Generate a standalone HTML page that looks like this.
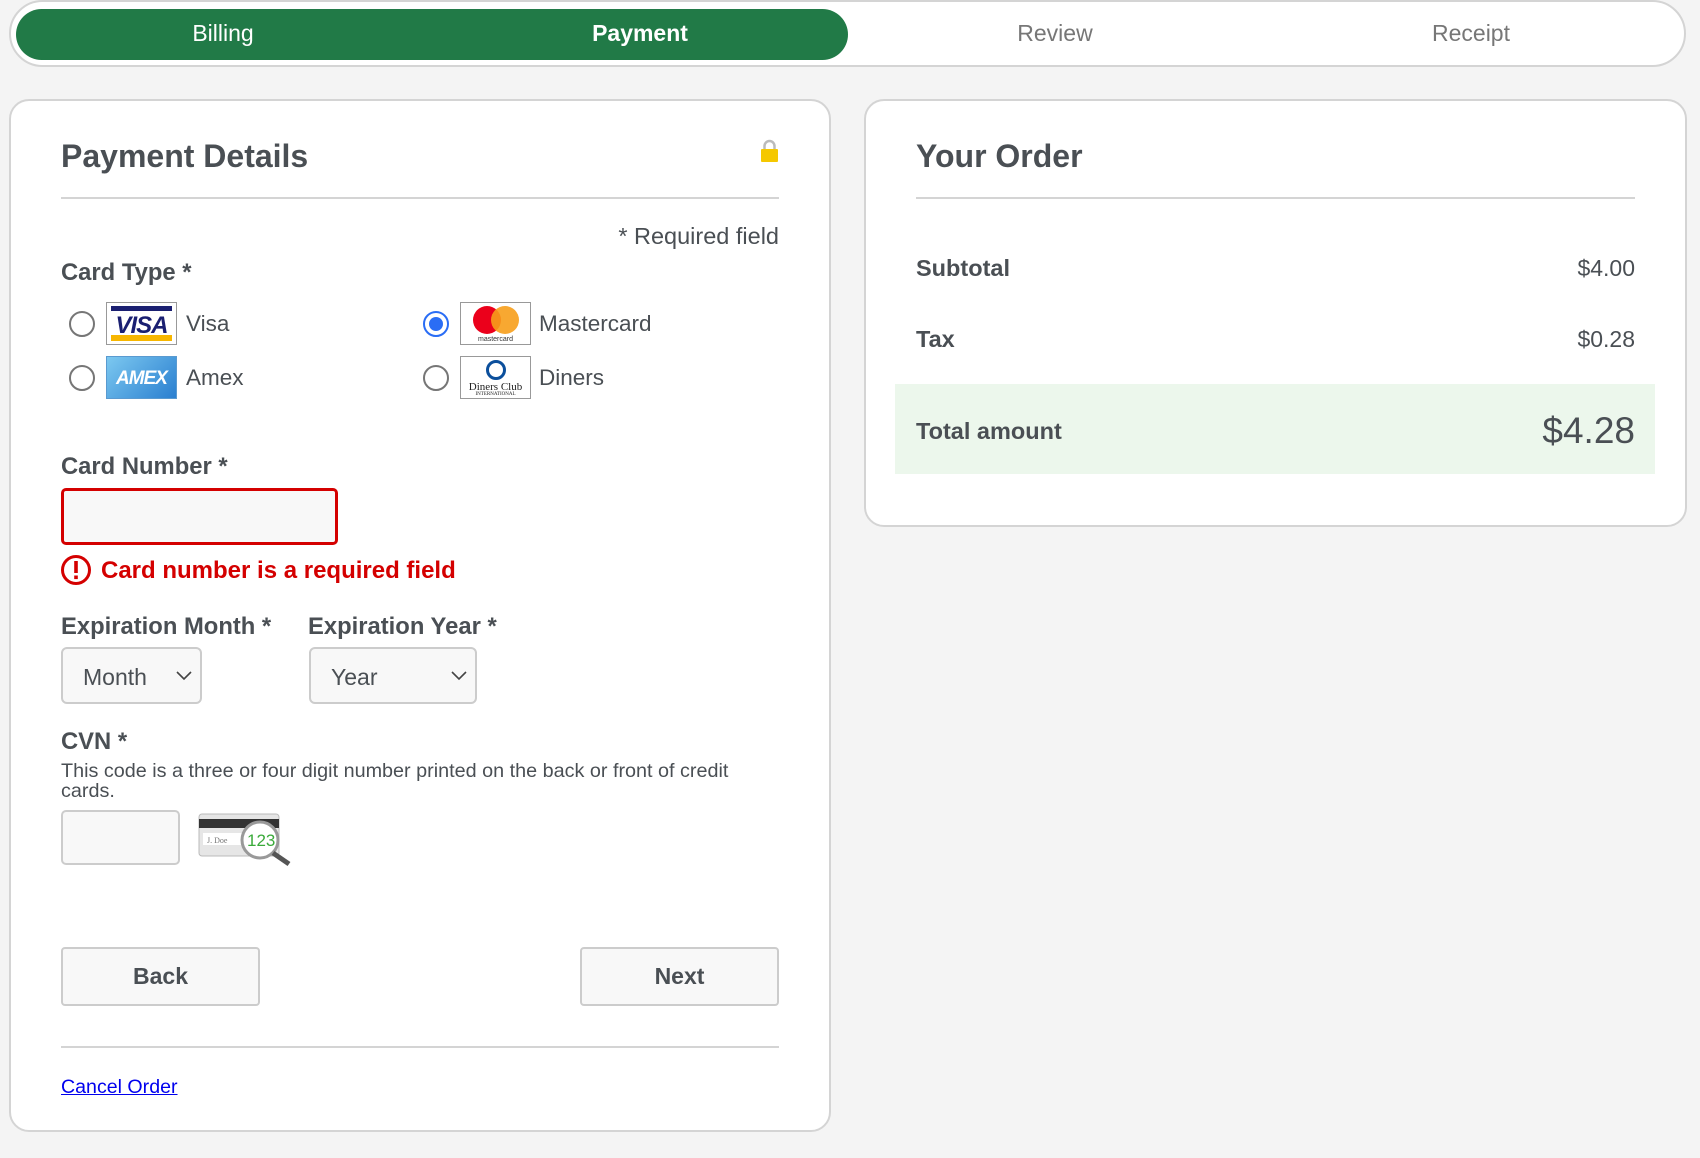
<!DOCTYPE html>
<html><head><meta charset="utf-8"><style>
*{box-sizing:border-box;margin:0;padding:0}
body{width:1700px;height:1158px;background:#f4f4f4;font-family:"Liberation Sans",Arial,sans-serif;color:#4a4f54;position:relative;overflow:hidden}
.a{position:absolute}
.lbl{font-size:23.8px;font-weight:bold;color:#4a4f54}
.t{line-height:1;white-space:nowrap}
.radio{position:absolute;width:26px;height:26px;border:2px solid #767676;border-radius:50%;background:#fff}
.logo{position:absolute;width:71px;height:43px;border:1px solid #999;background:#fff;overflow:hidden}
.sel{position:absolute;border:2px solid #ccc;border-radius:6px;background:#f8f8f8;font-size:23px;color:#4a4f54}
.btn{position:absolute;border:2px solid #ccc;border-radius:4px;background:#f8f8f8;font-size:23px;font-weight:bold;text-align:center;line-height:55px;color:#4a4f54}
</style></head><body>
<!-- stepper -->
<div class="a" style="left:9px;top:0;width:1677px;height:67px;border:2px solid #d4d4d4;border-radius:34px;background:#fff"></div>
<div class="a" style="left:16px;top:9px;width:832px;height:51px;background:#217a47;border-radius:26px"></div>
<div class="a t" style="left:123px;top:22px;width:200px;text-align:center;font-size:23px;color:#fff">Billing</div>
<div class="a t" style="left:540px;top:22px;width:200px;text-align:center;font-size:23px;color:#fff;font-weight:bold">Payment</div>
<div class="a t" style="left:955px;top:22px;width:200px;text-align:center;font-size:23px;color:#777">Review</div>
<div class="a t" style="left:1371px;top:22px;width:200px;text-align:center;font-size:23px;color:#777">Receipt</div>

<!-- left card -->
<div class="a" style="left:9px;top:99px;width:822px;height:1033px;border:2px solid #d4d4d4;border-radius:20px;background:#fff"></div>
<div class="a t" style="left:61px;top:140px;font-size:32px;font-weight:bold">Payment Details</div>
<svg class="a" style="left:760px;top:139px" width="19" height="24" viewBox="0 0 19 24"><path d="M4.5 11V7a5 5 0 0 1 10 0v4" fill="none" stroke="#bbb" stroke-width="2.5"/><rect x="1" y="10" width="17" height="13" rx="1" fill="#f5c800"/></svg>
<div class="a" style="left:61px;top:197px;width:718px;height:2px;background:#d4d4d4"></div>
<div class="a t" style="left:579px;top:225px;width:200px;text-align:right;font-size:23.5px">* Required field</div>
<div class="a t lbl" style="left:61px;top:261px">Card Type *</div>

<div class="radio" style="left:69px;top:311px"></div>
<div class="logo" style="left:106px;top:302px"><div style="position:absolute;left:4px;top:3px;right:4px;height:5px;background:#1a1f71"></div><div style="position:absolute;left:0;right:0;top:9px;text-align:center;font:italic bold 24px 'Liberation Sans';color:#1a1f71;letter-spacing:-1px">VISA</div><div style="position:absolute;left:4px;bottom:3px;right:4px;height:6px;background:#f7b600"></div></div>
<div class="a t" style="left:186px;top:313px;font-size:22.5px">Visa</div>

<div class="radio" style="left:423px;top:311px;border-color:#2a6df5"><div style="position:absolute;left:4px;top:4px;width:14px;height:14px;border-radius:50%;background:#2a6df5"></div></div>
<div class="logo" style="left:460px;top:302px"><div style="position:absolute;left:12px;top:3px;width:28px;height:28px;border-radius:50%;background:#eb001b"></div><div style="position:absolute;left:30px;top:3px;width:28px;height:28px;border-radius:50%;background:#f79e1b;opacity:.9"></div><div style="position:absolute;left:0;right:0;bottom:1px;text-align:center;font-size:7px;color:#333">mastercard</div></div>
<div class="a t" style="left:539px;top:313px;font-size:22.5px">Mastercard</div>

<div class="radio" style="left:69px;top:365px"></div>
<div class="logo" style="left:106px;top:356px;background:linear-gradient(135deg,#7cc8f0,#2a7fd0);border-color:#5a9ad0"><div style="position:absolute;left:0;right:0;top:11px;text-align:center;font:italic bold 19px 'Liberation Sans';color:#fff;letter-spacing:-1px">AMEX</div></div>
<div class="a t" style="left:186px;top:367px;font-size:22.5px">Amex</div>

<div class="radio" style="left:423px;top:365px"></div>
<div class="logo" style="left:460px;top:356px"><div style="position:absolute;left:25px;top:3px;width:20px;height:20px;border:3px solid #0b4f9c;border-radius:50%"></div><div style="position:absolute;left:0;right:0;top:24px;text-align:center;font:11px 'Liberation Serif';color:#222">Diners Club</div><div style="position:absolute;left:0;right:0;top:35px;text-align:center;font:5px 'Liberation Serif';color:#222">INTERNATIONAL</div></div>
<div class="a t" style="left:539px;top:367px;font-size:22.5px">Diners</div>

<div class="a t lbl" style="left:61px;top:455px">Card Number *</div>
<div class="a" style="left:61px;top:488px;width:277px;height:57px;border:3px solid #d40000;border-radius:5px;background:#f8f8f8"></div>
<svg class="a" style="left:60px;top:554px" width="32" height="32" viewBox="0 0 32 32"><circle cx="16" cy="16" r="13.5" fill="none" stroke="#d40000" stroke-width="3"/><rect x="14.2" y="7" width="3.6" height="12" fill="#d40000"/><rect x="14.2" y="21.5" width="3.6" height="3.6" fill="#d40000"/></svg>
<div class="a t" style="left:101px;top:559px;font-size:24px;font-weight:bold;color:#d40000">Card number is a required field</div>

<div class="a t lbl" style="left:61px;top:615px">Expiration Month *</div>
<div class="a t lbl" style="left:308px;top:615px">Expiration Year *</div>
<div class="sel" style="left:61px;top:647px;width:141px;height:57px"><span class="a t" style="left:20px;top:17px">Month</span><svg class="a" style="right:8px;top:22px" width="16" height="10"><path d="M1 1l7 7 7-7" fill="none" stroke="#444" stroke-width="1.6"/></svg></div>
<div class="sel" style="left:309px;top:647px;width:168px;height:57px"><span class="a t" style="left:20px;top:17px">Year</span><svg class="a" style="right:8px;top:22px" width="16" height="10"><path d="M1 1l7 7 7-7" fill="none" stroke="#444" stroke-width="1.6"/></svg></div>

<div class="a t lbl" style="left:61px;top:730px">CVN *</div>
<div class="a" style="left:61px;top:761px;width:700px;font-size:19.8px;line-height:20px">This code is a three or four digit number printed on the back or front of credit cards.</div>
<div class="a" style="left:61px;top:810px;width:119px;height:55px;border:2px solid #ccc;border-radius:5px;background:#f8f8f8"></div>
<svg class="a" style="left:197px;top:811px" width="104" height="56" viewBox="0 0 104 56"><rect x="2" y="3" width="80" height="42" rx="3" fill="#e6e6e6" stroke="#bbb"/><rect x="2" y="8" width="80" height="9" fill="#333"/><rect x="6" y="22" width="40" height="12" fill="#fff"/><text x="10" y="32" font-size="8" fill="#777" font-family="Liberation Serif">J. Doe</text><circle cx="63" cy="29" r="18" fill="#fff" stroke="#999" stroke-width="3"/><line x1="76" y1="42" x2="92" y2="53" stroke="#555" stroke-width="5"/><text x="50" y="35" font-size="17" fill="#3aaa3a" font-family="Liberation Sans">123</text></svg>

<div class="btn" style="left:61px;top:947px;width:199px;height:59px">Back</div>
<div class="btn" style="left:580px;top:947px;width:199px;height:59px">Next</div>
<div class="a" style="left:61px;top:1046px;width:718px;height:2px;background:#d4d4d4"></div>
<div class="a t" style="left:61px;top:1078px;font-size:19.6px;color:#0000ee;text-decoration:underline">Cancel Order</div>

<!-- right card -->
<div class="a" style="left:864px;top:99px;width:823px;height:428px;border:2px solid #d4d4d4;border-radius:20px;background:#fff"></div>
<div class="a t" style="left:916px;top:140px;font-size:32px;font-weight:bold">Your Order</div>
<div class="a" style="left:916px;top:197px;width:719px;height:2px;background:#d4d4d4"></div>
<div class="a t" style="left:916px;top:257px;font-size:23.5px;font-weight:bold">Subtotal</div>
<div class="a t" style="left:1435px;top:257px;width:200px;text-align:right;font-size:23px">$4.00</div>
<div class="a t" style="left:916px;top:328px;font-size:23.5px;font-weight:bold">Tax</div>
<div class="a t" style="left:1435px;top:328px;width:200px;text-align:right;font-size:23px">$0.28</div>
<div class="a" style="left:895px;top:384px;width:760px;height:90px;background:#ecf7ec"></div>
<div class="a t" style="left:916px;top:420px;font-size:23.5px;font-weight:bold">Total amount</div>
<div class="a t" style="left:1435px;top:412px;width:200px;text-align:right;font-size:37px">$4.28</div>
</body></html>
